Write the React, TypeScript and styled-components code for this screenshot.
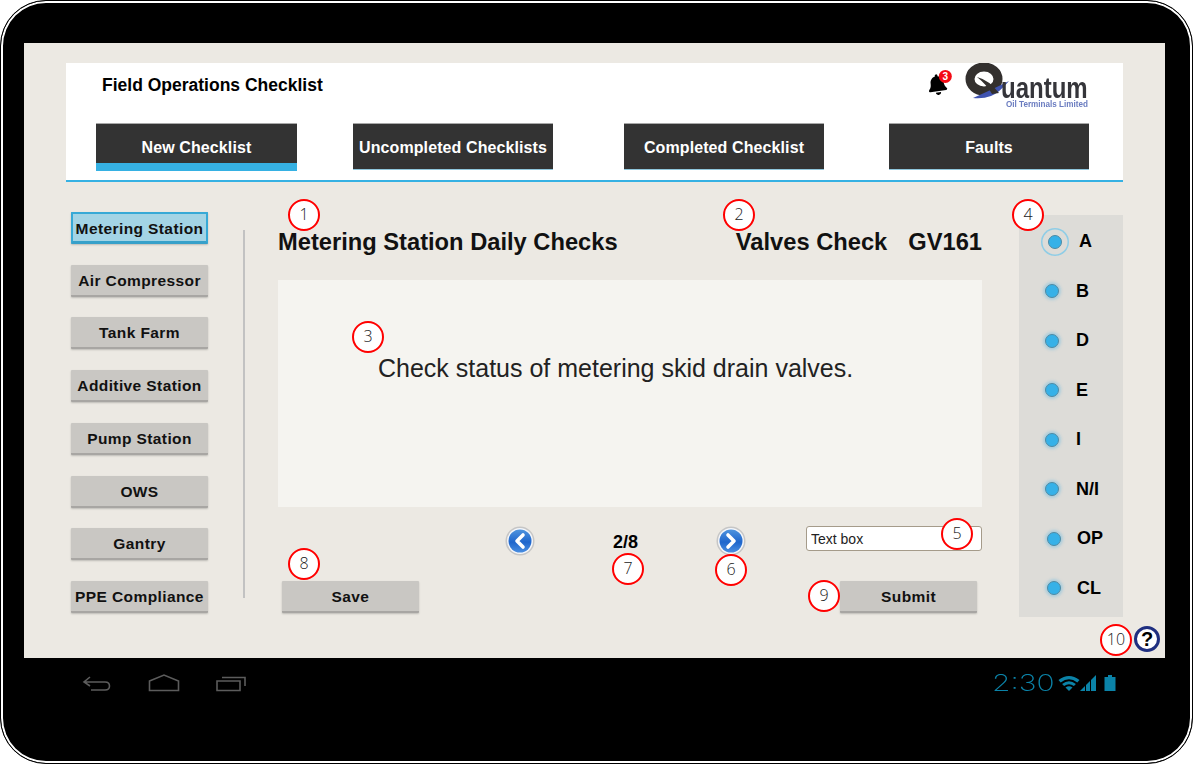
import styled, { createGlobalStyle } from 'styled-components';
import { FaBell } from 'react-icons/fa';

const tabs = [
  { label: 'New Checklist', gap: 30, width: 201, active: true },
  { label: 'Uncompleted Checklists', gap: 56, width: 200 },
  { label: 'Completed Checklist', gap: 71, width: 200 },
  { label: 'Faults', gap: 65, width: 200 },
];

const stations = [
  'Metering Station',
  'Air Compressor',
  'Tank Farm',
  'Additive Station',
  'Pump Station',
  'OWS',
  'Gantry',
  'PPE Compliance',
];

const options = [
  { label: 'A', shift: 3, gap: 17, selected: true },
  { label: 'B', shift: 0, gap: 17 },
  { label: 'D', shift: 0, gap: 17 },
  { label: 'E', shift: 0, gap: 17 },
  { label: 'I', shift: 0, gap: 17 },
  { label: 'N/I', shift: 0, gap: 17 },
  { label: 'OP', shift: 2, gap: 16 },
  { label: 'CL', shift: 2, gap: 16 },
];

// callout centres, relative to the screen
const markers = [
  { n: 1, x: 280, y: 172 },
  { n: 2, x: 715, y: 172 },
  { n: 3, x: 344, y: 294 },
  { n: 4, x: 1004, y: 172 },
  { n: 5, x: 933, y: 491 },
  { n: 6, x: 707, y: 527 },
  { n: 7, x: 604, y: 526 },
  { n: 8, x: 280, y: 521 },
  { n: 9, x: 800, y: 553 },
  { n: 10, x: 1092, y: 597 },
];

function App() {
  return (
    <>
      <GlobalStyle />
      <Device>
        <Screen>
          <Header>
            <TitleRow>
              <AppTitle>Field Operations Checklist</AppTitle>
              <BellWrap>
                <FaBell size={21} />
                <BellBadge>3</BellBadge>
              </BellWrap>
              <Logo />
            </TitleRow>
            <TabRow>
              {tabs.map((t) => (
                <Tab key={t.label} $gap={t.gap} $width={t.width} $active={t.active}>
                  {t.label}
                </Tab>
              ))}
            </TabRow>
          </Header>

          <Content>
            <Sidebar>
              {stations.map((s, i) => (
                <GreyButton key={s} $selected={i === 0}>
                  {s}
                </GreyButton>
              ))}
            </Sidebar>
            <Divider />
            <Main>
              <HeadingRow>
                <Heading>Metering Station Daily Checks</Heading>
                <SubHeading>
                  <span>Valves Check</span>
                  <span>GV161</span>
                </SubHeading>
              </HeadingRow>
              <QuestionCard>Check status of metering skid drain valves.</QuestionCard>
              <PagerRow>
                <RoundNav dir="left" />
                <PageCount>2/8</PageCount>
                <RoundNav dir="right" />
                <TextBox defaultValue="Text box" />
              </PagerRow>
              <ActionRow>
                <GreyButton>Save</GreyButton>
                <GreyButton>Submit</GreyButton>
              </ActionRow>
            </Main>
            <OptionPanel>
              {options.map((o) => (
                <OptionRow key={o.label} $shift={o.shift}>
                  <Radio $selected={o.selected} />
                  <OptionLabel $gap={o.gap}>{o.label}</OptionLabel>
                </OptionRow>
              ))}
            </OptionPanel>
          </Content>

          <HelpIcon>?</HelpIcon>
          {markers.map((m) => (
            <Marker key={m.n} $x={m.x} $y={m.y}>
              {m.n}
            </Marker>
          ))}
        </Screen>

        <SystemBar>
          <SoftKeys>
            <svg width="30" height="18" viewBox="0 0 30 18" fill="none" stroke="#5c5c5c" strokeWidth="1.6">
              <path d="M8 3 L2 8 L8 12 M2 8 H23 Q27.5 8 27.5 12 Q27.5 16 23 16 H9" />
            </svg>
            <svg width="32" height="18" viewBox="0 0 32 18" fill="none" stroke="#5c5c5c" strokeWidth="1.6">
              <path d="M1.5 7 L16 1 L30.5 7 V16.5 H1.5 Z" />
            </svg>
            <svg width="30" height="18" viewBox="0 0 30 18" fill="none" stroke="#5c5c5c" strokeWidth="1.6">
              <path d="M1 7 H24 V16.5 H1 Z M6 3.5 H29 V12" />
            </svg>
          </SoftKeys>
          <StatusGroup>
            <Clock>2:30</Clock>
            <svg width="22" height="16" viewBox="0 0 21 16" fill="#0b83a8">
              <path d="M0 5 Q10.5 -3 21 5 L18.8 7.4 Q10.5 1 2.2 7.4 Z" />
              <path d="M3.6 9 Q10.5 3.4 17.4 9 L15.4 11 Q10.5 7.4 5.6 11 Z" />
              <path d="M7 12.4 Q10.5 10 14 12.4 L10.5 16 Z" />
            </svg>
            <svg width="16" height="16" viewBox="0 0 16 16" fill="#0b83a8">
              <path d="M0 16 L5 11 V16 Z" />
              <path d="M6 10 L10 6 V16 H6 Z" />
              <path d="M11 5 L16 0 V16 H11 Z" />
            </svg>
            <Battery viewBox="0 0 12 16" width="12" height="16" fill="#0b83a8">
              <path d="M4 0 H8 V2 H11.5 V16 H0.5 V2 H4 Z" />
            </Battery>
          </StatusGroup>
        </SystemBar>
      </Device>
    </>
  );
}

function Logo() {
  return (
    <LogoSvg width="124" height="52" viewBox="0 0 124 52">
      <ellipse cx="19" cy="16" rx="14" ry="12" fill="none" stroke="#33302e" strokeWidth="9" />
      <path d="M8 35 Q24 28 44 18 Q34 30 26 33 Q18 36 8 35 Z" fill="#3f53b0" />
      <path d="M12 14 Q24 17 34 30 L27 31 Q22 22 12 14 Z" fill="#33302e" />
      <text transform="translate(36 35) scale(0.8 1)" fontFamily="'Liberation Sans', Arial, sans-serif" fontWeight="700" fontSize="30" fill="#35353a">
        uantum
      </text>
      <text x="41" y="44" fontFamily="'Liberation Sans', Arial, sans-serif" fontWeight="700" fontSize="8.5" fill="#6a7cc0" textLength="82" lengthAdjust="spacingAndGlyphs">
        Oil Terminals Limited
      </text>
    </LogoSvg>
  );
}

function RoundNav({ dir }: { dir: 'left' | 'right' }) {
  const d = dir === 'left' ? 'M18 9 L12 15 L18 21' : 'M12 9 L18 15 L12 21';
  const id = `gloss-${dir}`;
  return (
    <svg width="30" height="30" viewBox="0 0 30 30">
      <defs>
        <linearGradient id={id} x1="0" y1="0" x2="0" y2="1">
          <stop offset="0" stopColor="#4f94de" />
          <stop offset="0.55" stopColor="#1f66cc" />
          <stop offset="1" stopColor="#4a8ee0" />
        </linearGradient>
      </defs>
      <circle cx="15" cy="15" r="14.5" fill="#c6c6c6" />
      <circle cx="15" cy="15" r="13" fill="#f4f6fa" />
      <circle cx="15" cy="15" r="11.5" fill={`url(#${id})`} />
      <path d={d} fill="none" stroke="#fff" strokeWidth="3.6" strokeLinecap="round" strokeLinejoin="round" />
    </svg>
  );
}

export default App;

const GlobalStyle = createGlobalStyle`
  html, body {
    margin: 0;
    padding: 0;
    background: #fff;
    font-family: 'Liberation Sans', Arial, sans-serif;
  }
`;

const Device = styled.div`
  box-sizing: border-box;
  width: 1193px;
  height: 764px;
  padding: 42px 0 0 23px;
  background: #000;
  border: 1px solid #000;
  border-radius: 46px;
  box-shadow: inset 0 0 0 2px #fff;
  overflow: hidden;
`;

const Screen = styled.div`
  position: relative;
  box-sizing: border-box;
  width: 1141px;
  height: 615px;
  padding: 20px 42px 0 43px;
  background: #ece9e3;
`;

const Header = styled.header`
  box-sizing: border-box;
  height: 119px;
  margin-left: -1px;
  background: #fff;
  border-bottom: 2px solid #36b1e3;
`;

const TitleRow = styled.div`
  display: flex;
  align-items: flex-start;
  height: 60px;
`;

const AppTitle = styled.h1`
  margin: 13px 0 0 36px;
  font-size: 17.5px;
  line-height: 18px;
  font-weight: 700;
  color: #000;
`;

const BellWrap = styled.div`
  position: relative;
  margin: 11px 0 0 auto;
  width: 23px;
  height: 23px;
  transform: rotate(-8deg);
  color: #000;
`;

const BellBadge = styled.span`
  position: absolute;
  top: -3px;
  right: -3px;
  width: 13px;
  height: 13px;
  border-radius: 50%;
  background: #f40a14;
  color: #fff;
  font-size: 10px;
  line-height: 13px;
  font-weight: 700;
  text-align: center;
  transform: rotate(8deg);
`;

const LogoSvg = styled.svg`
  margin: 0 34px 0 15px;
  filter: blur(0.5px);
`;

const TabRow = styled.nav`
  display: flex;
  align-items: flex-start;
`;

const Tab = styled.div<{ $gap: number; $width: number; $active?: boolean }>`
  box-sizing: border-box;
  width: ${(p) => p.$width}px;
  height: ${(p) => (p.$active ? 48 : 47)}px;
  margin-left: ${(p) => p.$gap}px;
  padding-top: 16px;
  background: #333;
  border-top: 1px solid #a8a8a8;
  border-bottom: ${(p) => (p.$active ? '8px solid #36b1e3' : '1px solid #8fc6dc')};
  color: #fff;
  font-size: 16px;
  line-height: 16px;
  font-weight: 700;
  letter-spacing: 0.1px;
  text-align: center;
  white-space: nowrap;
`;

const Content = styled.div`
  display: flex;
  align-items: flex-start;
`;

const Sidebar = styled.aside`
  display: flex;
  flex-direction: column;
  justify-content: space-between;
  box-sizing: border-box;
  width: 137px;
  height: 401px;
  margin: 30px 0 0 4px;
`;

const GreyButton = styled.button<{ $selected?: boolean }>`
  box-sizing: border-box;
  width: 137px;
  height: 32px;
  padding: 2px 0 0;
  background: ${(p) => (p.$selected ? '#a3d4e5' : '#c9c7c3')};
  border: ${(p) => (p.$selected ? '2px solid #37a9d6' : 'none')};
  border-bottom: ${(p) => (p.$selected ? '3px solid #37a0c9' : '2px solid #a8a6a3')};
  border-radius: 1px;
  box-shadow: 0 1px 2px rgba(0, 0, 0, 0.2);
  color: #111;
  font-family: 'Liberation Sans', Arial, sans-serif;
  font-size: 15.5px;
  font-weight: 700;
  letter-spacing: 0.4px;
  white-space: nowrap;
`;

const Divider = styled.div`
  width: 2px;
  height: 368px;
  margin: 48px 0 0 35px;
  background: #c2c2c2;
`;

const Main = styled.main`
  width: 704px;
  margin-left: 33px;
`;

const HeadingRow = styled.div`
  display: flex;
  justify-content: space-between;
  align-items: center;
  box-sizing: border-box;
  height: 98px;
  padding: 40px 0 18px;
`;

const Heading = styled.h2`
  margin: 0;
  font-size: 23.7px;
  font-weight: 700;
  color: #111;
`;

const SubHeading = styled(Heading).attrs({ as: 'div' })`
  display: flex;
  gap: 21px;
`;

const QuestionCard = styled.section`
  box-sizing: border-box;
  height: 227px;
  padding: 74px 0 0 100px;
  background: #f5f4f0;
  color: #222;
  font-size: 25px;
  line-height: 28px;
`;

const PagerRow = styled.div`
  display: flex;
  align-items: center;
  height: 28px;
  margin-top: 20px;
  padding-left: 227px;
`;

const PageCount = styled.span`
  width: 24px;
  margin: 2px 79px 0 78px;
  font-size: 18px;
  font-weight: 700;
  color: #000;
  white-space: nowrap;
  text-align: center;
`;

const TextBox = styled.input`
  box-sizing: border-box;
  width: 176px;
  height: 25px;
  margin: -5px 0 0 60px;
  padding: 0 4px;
  background: #fff;
  border: 1px solid #a59b8a;
  border-radius: 3px;
  outline: none;
  color: #222;
  font-family: 'Liberation Sans', Arial, sans-serif;
  font-size: 14px;
`;

const ActionRow = styled.div`
  display: flex;
  justify-content: space-between;
  margin-top: 26px;
  padding: 0 5px 0 4px;
`;

const OptionPanel = styled.aside`
  box-sizing: border-box;
  width: 104px;
  height: 402px;
  margin: 33px 0 0 37px;
  padding: 2px 0 4px;
  display: flex;
  flex-direction: column;
  justify-content: space-between;
  background: #dddcd8;
`;

const OptionRow = styled.div<{ $shift: number }>`
  display: flex;
  align-items: center;
  height: 50px;
  padding-left: ${(p) => 26 + p.$shift}px;
`;

const Radio = styled.span<{ $selected?: boolean }>`
  box-sizing: border-box;
  flex: none;
  width: 14px;
  height: 14px;
  border-radius: 50%;
  background: #36b1e8;
  border: 1px solid #4f8aa3;
  box-shadow: ${(p) =>
    p.$selected
      ? '0 0 0 5.5px #dddcd8, 0 0 0 7px #8fcde6'
      : '0 0 3px 2px rgba(90, 180, 225, 0.4)'};
`;

const OptionLabel = styled.span<{ $gap: number }>`
  margin-left: ${(p) => p.$gap}px;
  font-size: 18px;
  font-weight: 700;
  color: #000;
`;

const HelpIcon = styled.div`
  position: absolute;
  left: 1110px;
  top: 583px;
  box-sizing: border-box;
  width: 26px;
  height: 26px;
  border: 3px solid #1f2f80;
  border-radius: 50%;
  background: #fff;
  color: #000;
  font-size: 20px;
  line-height: 20px;
  font-weight: 700;
  text-align: center;
`;

const Marker = styled.div<{ $x: number; $y: number }>`
  position: absolute;
  left: ${(p) => p.$x - 16}px;
  top: ${(p) => p.$y - 16}px;
  box-sizing: border-box;
  width: 32px;
  height: 32px;
  border: 2.5px solid #f00;
  border-radius: 50%;
  background: #fff;
  color: #222;
  font-family: 'Open Sans', sans-serif;
  font-size: 16px;
  font-weight: 300;
  line-height: 27px;
  text-align: center;
`;

const SystemBar = styled.footer`
  display: flex;
  justify-content: space-between;
  align-items: center;
  box-sizing: border-box;
  width: 1141px;
  height: 50px;
  padding: 0 49px 0 58px;
`;

const SoftKeys = styled.div`
  display: flex;
  align-items: center;
  gap: 36px;
`;

const StatusGroup = styled.div`
  display: flex;
  align-items: center;
`;

const Clock = styled.span`
  display: inline-block;
  width: 66px;
  color: #0b83a8;
  font-family: Inter, 'Liberation Sans', sans-serif;
  font-size: 23px;
  font-weight: 200;
  line-height: 22px;
  white-space: nowrap;
  transform: scaleX(1.3);
  transform-origin: left center;
`;

const Battery = styled.svg`
  margin-left: 8px;
`;
